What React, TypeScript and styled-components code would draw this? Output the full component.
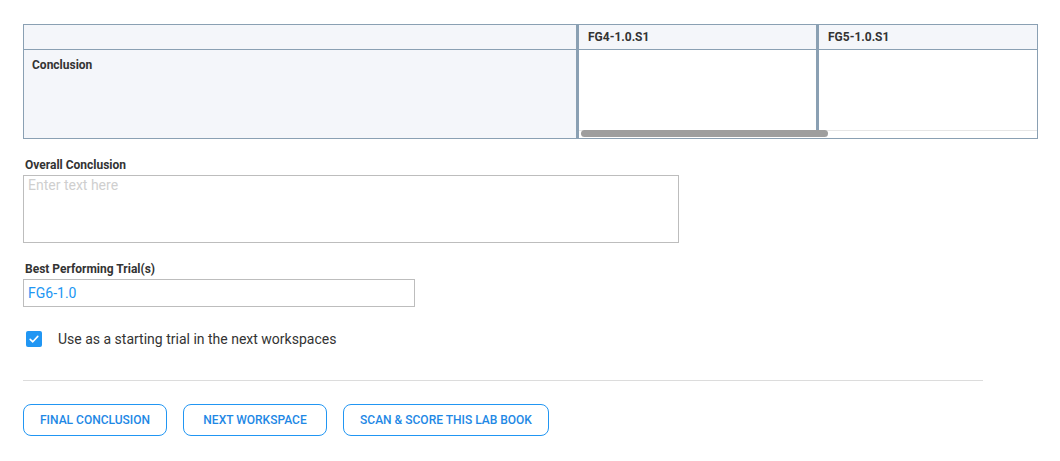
import React from "react";
import styled, { createGlobalStyle } from "styled-components";

const Global = createGlobalStyle`
  html, body { margin: 0; padding: 0; background: #fff; }
  body { font-family: Roboto, "Liberation Sans", Arial, sans-serif; color: #333; }
  * { box-sizing: border-box; }
`;

const Page = styled.div`
  padding: 24px 22px 0 23px;
  display: flex;
  flex-direction: column;
`;

const Table = styled.div`
  display: flex;
  border: 1px solid #8aa0b3;
  height: 115px;
`;

const LabelColumn = styled.div`
  width: 552px;
  flex: none;
  background: #f4f6fa;
  display: flex;
  flex-direction: column;
`;

const HeadCell = styled.div`
  height: 25px;
  flex: none;
  border-bottom: 1px solid #8aa0b3;
  background: #f4f6fa;
  font-size: 12px;
  font-weight: 700;
  color: #333;
  padding: 0 0 0 9px;
  display: flex;
  align-items: center;
  white-space: nowrap;
`;

const RowLabel = styled.div`
  padding: 8px 0 0 8px;
  font-size: 12px;
  font-weight: 700;
  color: #333;
`;

const Scroller = styled.div`
  flex: 1;
  min-width: 0;
  border-left: 3px solid #8aa0b3;
  overflow: hidden;
  display: flex;
  flex-direction: column;
`;

const ColumnsRow = styled.div`
  display: flex;
  height: 105px;
`;

const Col = styled.div<{ $first?: boolean }>`
  flex: ${(p) => (p.$first ? "0 0 237px" : "1 1 0")};
  min-width: 0;
  border-left: ${(p) => (p.$first ? "none" : "3px solid #8aa0b3")};
  display: flex;
  flex-direction: column;
`;

const BodyCell = styled.div`
  flex: 1;
  background: #fff;
`;

const ScrollTrack = styled.div`
  height: 8px;
  background: #fff;
  box-shadow: inset 0 1px 0 #e6e6e6;
  display: flex;
`;

const ScrollThumb = styled.div`
  height: 7px;
  margin-left: 2px;
  background: #9e9e9e;
  border-radius: 4px;
`;

const FieldLabel = styled.label<{ $top: number }>`
  margin: ${(p) => p.$top}px 0 2px 2px;
  font-size: 12px;
  font-weight: 700;
  color: #333;
  line-height: 16px;
`;

const TextArea = styled.textarea`
  width: 656px;
  height: 68px;
  border: 1px solid #bdbdbd;
  border-radius: 0;
  padding: 1px 4px;
  font-family: Roboto, "Liberation Sans", Arial, sans-serif;
  font-size: 14px;
  color: #333;
  resize: none;
  outline: none;
  &::placeholder { color: #cfcfcf; }
`;

const Input = styled.input`
  width: 392px;
  height: 28px;
  border: 1px solid #bdbdbd;
  border-radius: 0;
  padding: 0 4px;
  font-family: Roboto, "Liberation Sans", Arial, sans-serif;
  font-size: 14px;
  color: #2196f3;
  outline: none;
`;

const CheckRow = styled.label`
  margin: 24px 0 0 3px;
  display: flex;
  align-items: center;
  gap: 16px;
  font-size: 14px;
  color: #333;
  height: 16px;
`;

const CheckBox = styled.span`
  width: 16px;
  height: 16px;
  border-radius: 2px;
  background: #2196f3;
  display: flex;
  align-items: center;
  justify-content: center;
`;

const Divider = styled.hr`
  width: 960px;
  margin: 33px 0 0 0;
  border: none;
  border-top: 1px solid #dcdcdc;
  height: 0;
`;

const Buttons = styled.div`
  margin-top: 23px;
  display: flex;
  gap: 16px;
`;

const OutlineButton = styled.button`
  height: 32px;
  min-width: 144px;
  padding: 0 16px;
  border: 1px solid #2196f3;
  border-radius: 8px;
  background: #fff;
  color: #1e88e5;
  font-family: Roboto, "Liberation Sans", Arial, sans-serif;
  font-size: 12px;
  font-weight: 500;
  text-transform: uppercase;
  cursor: pointer;
`;

const columns = ["FG4-1.0.S1", "FG5-1.0.S1"];
const scroll = { visible: 457, content: 846 };

export default function App() {
  const thumbWidth = Math.round((scroll.visible * scroll.visible) / scroll.content);
  return (
    <>
      <Global />
      <Page>
        <Table>
          <LabelColumn>
            <HeadCell />
            <RowLabel>Conclusion</RowLabel>
          </LabelColumn>
          <Scroller>
            <ColumnsRow>
              {columns.map((c, i) => (
                <Col key={c} $first={i === 0}>
                  <HeadCell>{c}</HeadCell>
                  <BodyCell />
                </Col>
              ))}
            </ColumnsRow>
            <ScrollTrack>
              <ScrollThumb style={{ width: thumbWidth }} />
            </ScrollTrack>
          </Scroller>
        </Table>

        <FieldLabel $top={18}>Overall Conclusion</FieldLabel>
        <TextArea placeholder="Enter text here" />

        <FieldLabel $top={18}>Best Performing Trial(s)</FieldLabel>
        <Input defaultValue="FG6-1.0" />

        <CheckRow>
          <CheckBox>
            <svg width="12" height="12" viewBox="0 0 12 12" fill="none">
              <path d="M2.2 6.3 L4.8 8.8 L9.8 3.4" stroke="#fff" strokeWidth="1.6" strokeLinecap="round" strokeLinejoin="round" />
            </svg>
          </CheckBox>
          Use as a starting trial in the next workspaces
        </CheckRow>

        <Divider />

        <Buttons>
          <OutlineButton>Final Conclusion</OutlineButton>
          <OutlineButton>Next Workspace</OutlineButton>
          <OutlineButton>Scan &amp; Score this Lab Book</OutlineButton>
        </Buttons>
      </Page>
    </>
  );
}
